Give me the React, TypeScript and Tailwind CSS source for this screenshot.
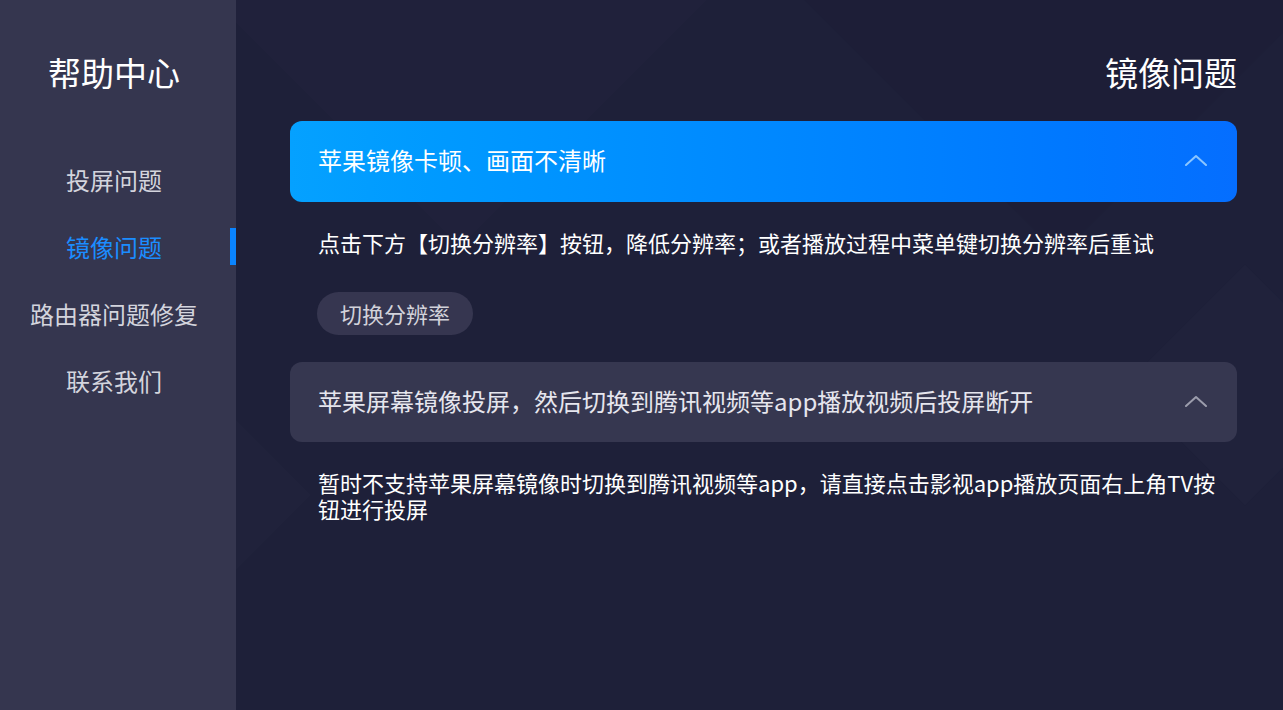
import React, { useState } from 'react';

const navItems = ['投屏问题', '镜像问题', '路由器问题修复', '联系我们'];

const faqs = [
  {
    q: '苹果镜像卡顿、画面不清晰',
    a: '点击下方【切换分辨率】按钮，降低分辨率；或者播放过程中菜单键切换分辨率后重试',
    action: '切换分辨率',
  },
  {
    q: '苹果屏幕镜像投屏，然后切换到腾讯视频等app播放视频后投屏断开',
    a: '暂时不支持苹果屏幕镜像时切换到腾讯视频等app，请直接点击影视app播放页面右上角TV按钮进行投屏',
  },
];

const ChevronUp: React.FC<{ className?: string }> = ({ className }) => (
  <svg width="22" height="12" viewBox="0 0 22 12" fill="none" className={className}>
    <polyline
      points="1,11 11,2 21,11"
      stroke="currentColor"
      strokeWidth="2"
      strokeLinecap="round"
      strokeLinejoin="round"
    />
  </svg>
);

const App: React.FC = () => {
  const [active, setActive] = useState(1);
  const [focused, setFocused] = useState(0);

  return (
    <div
      className="relative flex h-[710px] w-full overflow-hidden bg-[#1e2039] text-white"
      style={{ fontFamily: '"Noto Sans CJK SC", "Noto Sans", sans-serif' }}
    >
      {/* faint diamond pattern in the backdrop */}
      <div className="pointer-events-none absolute left-[250px] top-[-260px] h-[420px] w-[420px] rotate-45 bg-[#21233e] opacity-60" />
      <div className="pointer-events-none absolute left-[830px] top-[-300px] h-[460px] w-[460px] rotate-45 bg-[#1c1e36] opacity-70" />
      <div className="pointer-events-none absolute left-[1160px] top-[300px] h-[170px] w-[170px] rotate-45 bg-[#22243e] opacity-60" />
      <div className="pointer-events-none absolute left-[130px] top-[420px] h-[150px] w-[150px] rotate-45 bg-[#22243e] opacity-50" />

      <aside className="relative z-10 flex w-[236px] shrink-0 flex-col bg-[#373850]/95">
        <h1 className="mt-[52px] h-[40px] pr-[8px] text-center text-[33px] leading-[40px] text-white">
          帮助中心
        </h1>
        <nav className="mt-[54px] flex flex-col">
          {navItems.map((item, i) => (
            <button
              key={item}
              onClick={() => setActive(i)}
              className={`relative flex h-[67px] items-center justify-center pr-[8px] text-[24px] ${
                i === active ? 'text-[#1b8dff]' : 'text-[#d3d4dd]'
              }`}
            >
              {item}
              {i === active && (
                <span className="absolute right-0 top-[15px] h-[37px] w-[6px] bg-[#0a84ff]" />
              )}
            </button>
          ))}
        </nav>
      </aside>

      <main className="relative z-10 flex flex-1 flex-col pl-[54px] pr-[46px]">
        <h2 className="mt-[52px] h-[40px] text-right text-[33px] leading-[40px] text-white">
          镜像问题
        </h2>

        <div className="mt-[29px] flex flex-col">
          {faqs.map((f, i) => (
            <div key={f.q} className={i > 0 ? 'mt-[27px]' : ''}>
              <button
                onClick={() => setFocused(i)}
                className={`flex w-full items-center justify-between rounded-[12px] pb-[3px] pl-[28px] pr-[30px] text-left text-[24px] ${
                  i === focused
                    ? 'h-[81px] bg-gradient-to-r from-[#05a1ff] to-[#056eff] text-white'
                    : 'h-[80px] bg-[#363750] text-[#e6e6ee]'
                }`}
              >
                <span>{f.q}</span>
                <ChevronUp className={i === focused ? 'text-[#8cc6ff]' : 'text-[#9c9dac]'} />
              </button>
              <p className="mt-[27px] pl-[28px] pr-[20px] text-[22px] leading-[26px] text-white">
                {f.a}
              </p>
              {f.action && (
                <button className="ml-[27px] mt-[37px] h-[43px] rounded-full bg-[#363650] px-[23px] text-[22px] text-[#d2d2da]">
                  {f.action}
                </button>
              )}
            </div>
          ))}
        </div>
      </main>
    </div>
  );
};

export default App;
